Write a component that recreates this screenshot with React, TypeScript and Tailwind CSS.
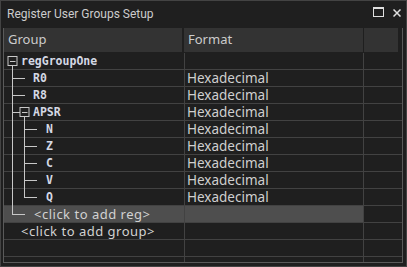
import React from "react";

type Row = {
  label: string;
  format?: string;
  pad: number;
  kind: "group" | "reg" | "sub" | "child" | "last" | "addReg" | "addGroup" | "empty";
};

const rows: Row[] = [
  { label: "regGroupOne", pad: 17, kind: "group" },
  { label: "R0", format: "Hexadecimal", pad: 29, kind: "reg" },
  { label: "R8", format: "Hexadecimal", pad: 29, kind: "reg" },
  { label: "APSR", format: "Hexadecimal", pad: 29, kind: "sub" },
  { label: "N", format: "Hexadecimal", pad: 42, kind: "child" },
  { label: "Z", format: "Hexadecimal", pad: 42, kind: "child" },
  { label: "C", format: "Hexadecimal", pad: 42, kind: "child" },
  { label: "V", format: "Hexadecimal", pad: 42, kind: "child" },
  { label: "Q", format: "Hexadecimal", pad: 42, kind: "last" },
  { label: "<click to add reg>", pad: 30, kind: "addReg" },
  { label: "<click to add group>", pad: 17, kind: "addGroup" },
  { label: "", pad: 0, kind: "empty" },
  { label: "", pad: 0, kind: "empty" },
];

const line = "#c8c8c8";

function MinusBox({ cx }: { cx: number }) {
  return (
    <g>
      <rect x={cx - 4.5} y={3.5} width={9} height={9} fill="none" stroke={line} strokeWidth={1} />
      <line x1={cx - 2.5} y1={8.5} x2={cx + 3} y2={8.5} stroke={line} strokeWidth={1} />
    </g>
  );
}

function Tree({ kind }: { kind: Row["kind"] }) {
  const v = (x: number, y1: number, y2: number) => (
    <line x1={x + 0.5} y1={y1} x2={x + 0.5} y2={y2} stroke={line} strokeWidth={1} />
  );
  const h = (x1: number, x2: number) => (
    <line x1={x1} y1={8.5} x2={x2} y2={8.5} stroke={line} strokeWidth={1} />
  );
  let parts: React.ReactNode = null;
  if (kind === "group") parts = (<>{v(8, 12.5, 17)}<MinusBox cx={8.5} /></>);
  if (kind === "reg") parts = (<>{v(8, 0, 17)}{h(8, 21)}</>);
  if (kind === "sub") parts = (<>{v(8, 0, 17)}{h(8, 16)}<MinusBox cx={20.5} />{v(20, 12.5, 17)}</>);
  if (kind === "child") parts = (<>{v(8, 0, 17)}{v(20, 0, 17)}{h(20, 33)}</>);
  if (kind === "last") parts = (<>{v(8, 0, 17)}{v(20, 0, 9)}{h(20, 33)}</>);
  if (kind === "addReg") parts = (<>{v(8, 0, 9)}{h(8, 21)}</>);
  if (!parts) return null;
  return (
    <svg className="absolute left-0 top-0 overflow-visible" width="40" height="17">
      {parts}
    </svg>
  );
}

export default function App() {
  return (
    <div className="w-[407px] h-[267px] bg-[#1f1f1f] border border-[#434343] flex flex-col font-['Noto_Sans',sans-serif] text-[#cccccc] overflow-hidden">
      <div className="h-[27px] flex items-start pl-[6px] pr-[5px] shrink-0">
        <span className="font-['Roboto',sans-serif] text-[12px] leading-[27px] flex-1">
          Register User Groups Setup
        </span>
        <svg width="11" height="10" className="mt-[6px] mr-[9px]" viewBox="0 0 11 10">
          <rect x="0.5" y="0.5" width="10" height="9" fill="none" stroke="#e0e0e0" strokeWidth="1" />
          <rect x="0" y="0" width="11" height="2" fill="#e0e0e0" />
        </svg>
        <svg width="8" height="8" className="mt-[8px]" viewBox="0 0 8 8">
          <path d="M0.5 0.5 L7.5 7.5 M7.5 0.5 L0.5 7.5" stroke="#e0e0e0" strokeWidth="1.5" />
        </svg>
      </div>
      <div className="ml-[2px] mr-[3px] mb-[3px] flex-1 border border-[#5a5a5a] border-t-0 overflow-hidden">
        <div className="grid grid-cols-[181px_179px_35px] h-[25px] border-b border-[#1f1f1f]">
          <div className="bg-[#333333] mr-[3px] flex items-center pl-[4px] text-[13px]">Group</div>
          <div className="bg-[#333333] -ml-[1px] mr-[1px] flex items-center pl-[4px] text-[13px]">Format</div>
          <div className="bg-[#333333] mr-[1px]" />
        </div>
        {rows.map((r, i) => (
          <div
            key={i}
            className="grid grid-cols-[181px_179px_35px] h-[17px] leading-[16px] border-b border-[#424242]"
          >
            <div
              className={
                "relative border-r border-[#424242] h-[16px] flex items-center whitespace-nowrap " +
                (r.kind === "addReg" ? "bg-[#4e4e4e]" : "")
              }
              style={{ paddingLeft: r.pad }}
            >
              <Tree kind={r.kind} />
              {r.kind === "addReg" || r.kind === "addGroup" ? (
                <span className="text-[13px] tracking-[0.5px] leading-[16px] text-[#d2d2d2]">{r.label}</span>
              ) : (
                <span className="font-['DejaVu_Sans_Mono',monospace] font-bold text-[11.5px] leading-[16px] text-[#d4d8e4]">
                  {r.label}
                </span>
              )}
            </div>
            <div
              className={
                "border-r border-[#424242] h-[16px] flex items-center pl-[2px] text-[13.5px] leading-[16px] text-[#cfcfcf] " +
                (r.kind === "addReg" ? "bg-[#4e4e4e]" : "")
              }
            >
              {r.format}
            </div>
            <div />
          </div>
        ))}
      </div>
    </div>
  );
}
